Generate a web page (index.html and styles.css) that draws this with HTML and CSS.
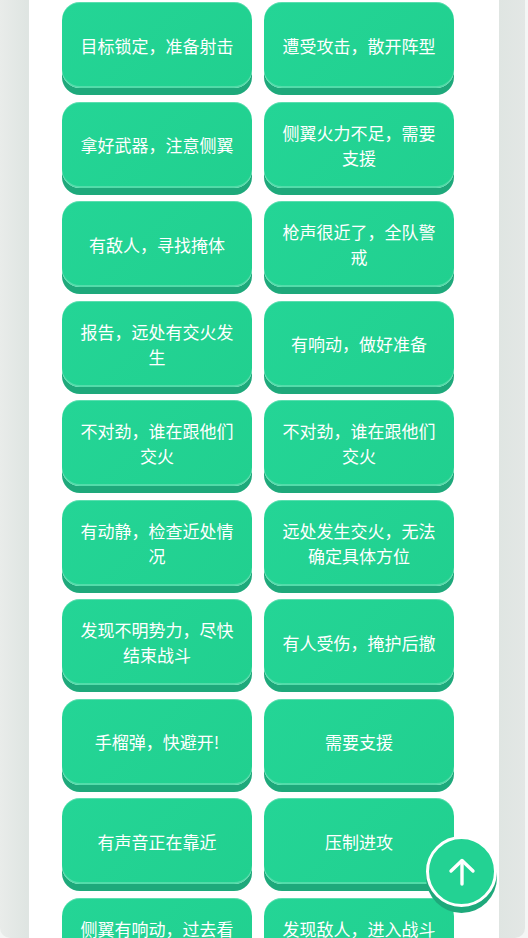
FILE: index.html
```html
<!DOCTYPE html>
<html lang="zh-CN">
<head>
    <meta charset="UTF-8">
    <meta name="viewport" content="width=device-width, initial-scale=1.0">
    <title>战术语音</title>
    <link rel="stylesheet" href="styles.css">
</head>
<body>
    <div class="frame">
        <div class="panel">
            <div class="voice-grid">
                <button class="voice-btn">目标锁定，准备射击</button>
                <button class="voice-btn">遭受攻击，散开阵型</button>
                <button class="voice-btn">拿好武器，注意侧翼</button>
                <button class="voice-btn">侧翼火力不足，需要支援</button>
                <button class="voice-btn">有敌人，寻找掩体</button>
                <button class="voice-btn">枪声很近了，全队警戒</button>
                <button class="voice-btn">报告，远处有交火发生</button>
                <button class="voice-btn">有响动，做好准备</button>
                <button class="voice-btn">不对劲，谁在跟他们交火</button>
                <button class="voice-btn">不对劲，谁在跟他们交火</button>
                <button class="voice-btn">有动静，检查近处情况</button>
                <button class="voice-btn">远处发生交火，无法确定具体方位</button>
                <button class="voice-btn">发现不明势力，尽快结束战斗</button>
                <button class="voice-btn">有人受伤，掩护后撤</button>
                <button class="voice-btn">手榴弹，快避开!</button>
                <button class="voice-btn">需要支援</button>
                <button class="voice-btn">有声音正在靠近</button>
                <button class="voice-btn">压制进攻</button>
                <button class="voice-btn">侧翼有响动，过去看看</button>
                <button class="voice-btn">发现敌人，进入战斗状态</button>
            </div>
        </div>
    </div>

    <button class="to-top" aria-label="回到顶部">
        <svg width="30" height="30" viewBox="0 0 30 30" fill="none" stroke="#fff" stroke-width="3.4" stroke-linecap="round" stroke-linejoin="round">
            <path d="M15 27V4"/>
            <path d="M4 14L15 3.5L26 14"/>
        </svg>
    </button>
</body>
</html>
```

FILE: styles.css
```css
html, body {
    margin: 0;
    padding: 0;
    height: 100%;
    overflow: hidden;
}
body {
    font-family: "Noto Sans CJK SC", "Noto Sans", sans-serif;
    background-color: #f4f6f5;
}
.frame {
    width: 525px;
    height: 938px;
    background: linear-gradient(90deg, #e9ecea 0%, #dfe5e2 5%, #dfe5e2 95%, #e3e7e5 100%);
    border-radius: 0 0 10px 10px;
    overflow: hidden;
}
.panel {
    margin-left: 29px;
    width: 470px;
    height: 100%;
    background-color: #fff;
    box-sizing: border-box;
    padding: 2px 45px 0 33px;
}
.voice-grid {
    display: grid;
    grid-template-columns: 190px 190px;
    column-gap: 12px;
    row-gap: 13.5px;
}
.voice-btn {
    height: 86px;
    box-sizing: border-box;
    padding: 0 15px;
    border: none;
    border-radius: 18px;
    background: linear-gradient(135deg, #24d596 0%, #21d08f 100%);
    box-shadow: inset 0 1px 0 rgba(255, 255, 255, 0.25),
                inset 0 -2px 0 rgba(255, 255, 255, 0.22),
                0 7px 0 #1ea97b;
    color: #fff;
    font-family: inherit;
    font-size: 17px;
    line-height: 25px;
    text-align: center;
    cursor: pointer;
}
.to-top {
    position: fixed;
    left: 426px;
    top: 836px;
    width: 71px;
    height: 71px;
    border-radius: 50%;
    border: 3px solid #fff;
    background-color: #23d293;
    box-shadow: 0 6px 0 #1ea97b;
    display: flex;
    align-items: center;
    justify-content: center;
    padding: 0;
    cursor: pointer;
}
```
